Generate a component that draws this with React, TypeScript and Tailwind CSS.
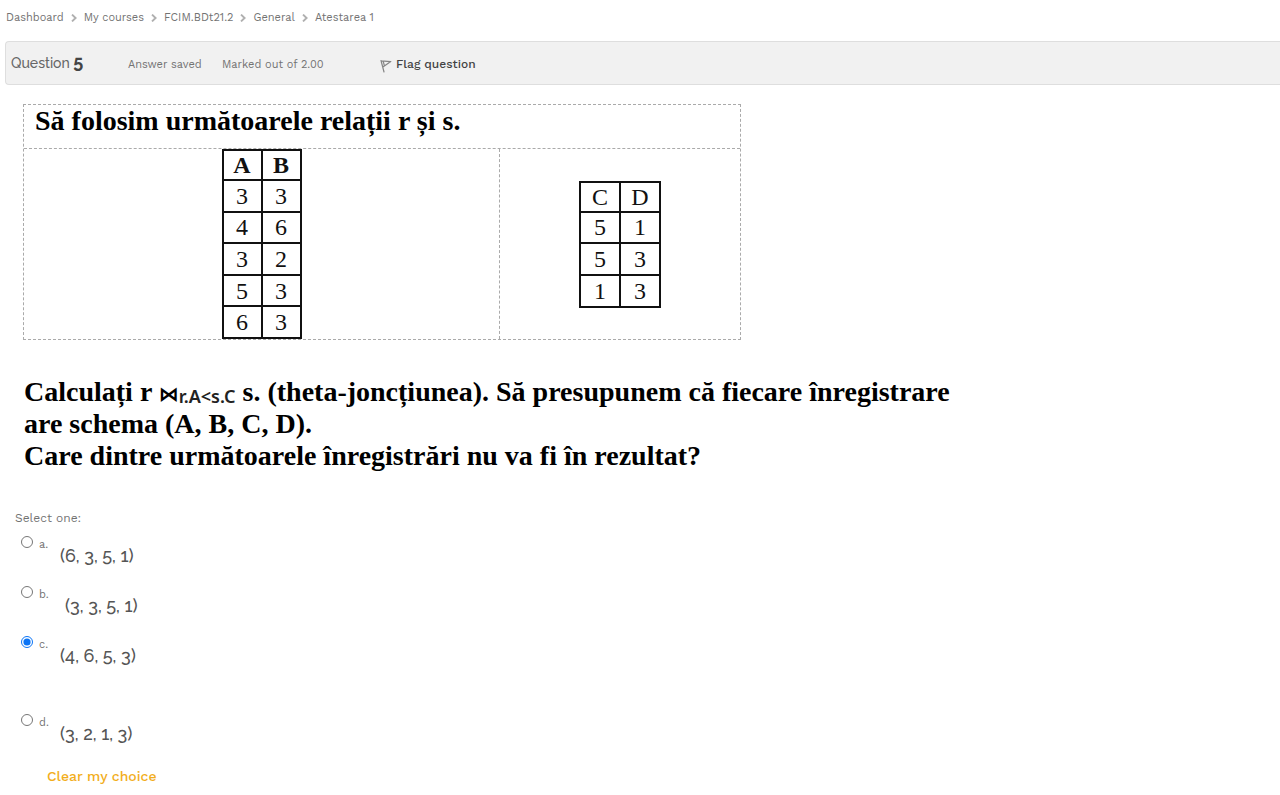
import { useState } from "react";

const crumbs = ["Dashboard", "My courses", "FCIM.BDt21.2", "General", "Atestarea 1"];

const relationR = [
  [3, 3],
  [4, 6],
  [3, 2],
  [5, 3],
  [6, 3],
];

const relationS = [
  [5, 1],
  [5, 3],
  [1, 3],
];

const answers = [
  { key: "a", text: "(6, 3, 5, 1)", row: "h-[50px]", indent: "ml-[11px]" },
  { key: "b", text: "(3, 3, 5, 1)", row: "h-[50px]", indent: "ml-4" },
  { key: "c", text: "(4, 6, 5, 3)", row: "h-[78px]", indent: "ml-[11px]" },
  { key: "d", text: "(3, 2, 1, 3)", row: "h-[50px]", indent: "ml-[11px]" },
];

function Relation({
  names,
  rows,
  bold,
  height,
  cell,
}: {
  names: string[];
  rows: number[][];
  bold?: boolean;
  height: string;
  cell: string;
}) {
  return (
    <table className={`border-collapse text-center text-2xl leading-7 text-[#111] ${height}`}>
      <thead>
        <tr>
          {names.map((name) => (
            <th
              key={name}
              scope="col"
              className={`border-2 border-[#111] p-0 ${cell} ${bold ? "font-bold" : "font-normal"}`}
            >
              {name}
            </th>
          ))}
        </tr>
      </thead>
      <tbody>
        {rows.map((row, i) => (
          <tr key={i}>
            {row.map((value, j) => (
              <td key={j} className="border-2 border-[#111] p-0">
                {value}
              </td>
            ))}
          </tr>
        ))}
      </tbody>
    </table>
  );
}

function Chevron() {
  return (
    <svg viewBox="0 0 6 8" className="h-2 w-1.5" fill="none" stroke="#b0b0b0" strokeWidth="1.9" aria-hidden="true">
      <path d="M1 .6 4.6 4 1 7.4" />
    </svg>
  );
}

function FlagIcon() {
  return (
    <svg viewBox="0 0 12 14" className="mt-1 h-3.5 w-3" fill="none" stroke="#858585" strokeWidth="1.2" aria-hidden="true">
      <path d="M1 1.5 4 13 M1 1.8 10.8 2.6 3.6 7.6 M3.2 2.2 4.4 6.8" strokeLinejoin="round" strokeLinecap="round" />
    </svg>
  );
}

export default function App() {
  const [choice, setChoice] = useState("c");

  return (
    <main className="min-h-screen bg-white font-['Work_Sans',Inter,sans-serif] text-[11px] leading-4 text-[#737373]">
      <nav aria-label="Breadcrumb" className="px-1.5 pt-2.5">
        <ol className="flex items-center gap-[7px]">
          {crumbs.map((crumb, i) => (
            <li key={crumb} className="flex items-center gap-[7px]">
              {i > 0 && <Chevron />}
              <a href="#">{crumb}</a>
            </li>
          ))}
        </ol>
      </nav>

      <header className="mt-[15px] ml-[5px] flex h-11 items-center rounded-l-sm border border-r-0 border-[#dedede] bg-[#f1f1f1] pt-0.5 pl-[5px]">
        <h1 className="w-[117px] pb-1 font-[Raleway,Lato,sans-serif] text-sm leading-4 font-medium text-[#666]">
          Question <span className="text-lg leading-4 font-bold text-[#444]">5</span>
        </h1>
        <p className="w-[94px] pt-0.5">Answer saved</p>
        <p className="w-[158px] pt-0.5">Marked out of 2.00</p>
        <button type="button" className="flex items-center gap-1 text-xs font-medium text-[#444]">
          <FlagIcon />
          Flag question
        </button>
      </header>

      <section className="mt-[19px] ml-6 font-['Liberation_Serif',serif] text-black">
        <div className="-ml-px grid max-w-[718px] grid-cols-[476fr_240fr] border border-dashed border-[#aaa]">
          <h2 className="col-span-2 h-11 border-b border-dashed border-[#aaa] pl-[11px] text-[28px] leading-8 font-bold">
            Să folosim următoarele relații r și s.
          </h2>
          <div className="flex items-center justify-center border-r border-dashed border-[#aaa]">
            <Relation names={["A", "B"]} rows={relationR} bold height="h-[190px]" cell="w-[39px]" />
          </div>
          <div className="flex items-center justify-center">
            <Relation names={["C", "D"]} rows={relationS} height="h-[127px]" cell="w-10" />
          </div>
        </div>

        <div className="mt-9 max-w-[940px] text-[28px] leading-8 font-bold">
          <p>
            Calculați r{" "}
            <span className="font-['DejaVu_Sans',sans-serif] text-xl leading-none font-bold">⋈</span>
            <sub className="bottom-[-2px] font-['Noto_Sans',sans-serif] text-lg leading-none font-semibold text-[#222]">
              r.A&lt;s.C
            </sub>{" "}
            s. (theta-joncțiunea). Să presupunem că fiecare înregistrare are schema (A, B, C, D).
          </p>
          <p>Care dintre următoarele înregistrări nu va fi în rezultat?</p>
        </div>
      </section>

      <form className="mt-[38px] ml-[15px]">
        <fieldset>
          <legend className="text-xs leading-4">Select one:</legend>
          <div className="pt-2.5 pl-1.5">
            {answers.map(({ key, text, row, indent }) => (
              <div key={key} className={`flex items-start ${row}`}>
                <input
                  id={`answer-${key}`}
                  type="radio"
                  name="answer"
                  value={key}
                  checked={choice === key}
                  onChange={() => setChoice(key)}
                  className="size-3 accent-[#0b74f5]"
                />
                <label htmlFor={`answer-${key}`} className="flex pl-1.5">
                  <span className="w-2.5 pt-px">{key}.</span>
                  <span
                    className={`pt-2 font-[Raleway,Lato,sans-serif] text-lg leading-6 font-medium text-[#555] ${indent}`}
                  >
                    {text}
                  </span>
                </label>
              </div>
            ))}
          </div>
          <button
            type="button"
            onClick={() => setChoice("")}
            className="mt-0.5 ml-8 text-sm leading-5 font-medium text-[#f2ae1c]"
          >
            Clear my choice
          </button>
        </fieldset>
      </form>
    </main>
  );
}
